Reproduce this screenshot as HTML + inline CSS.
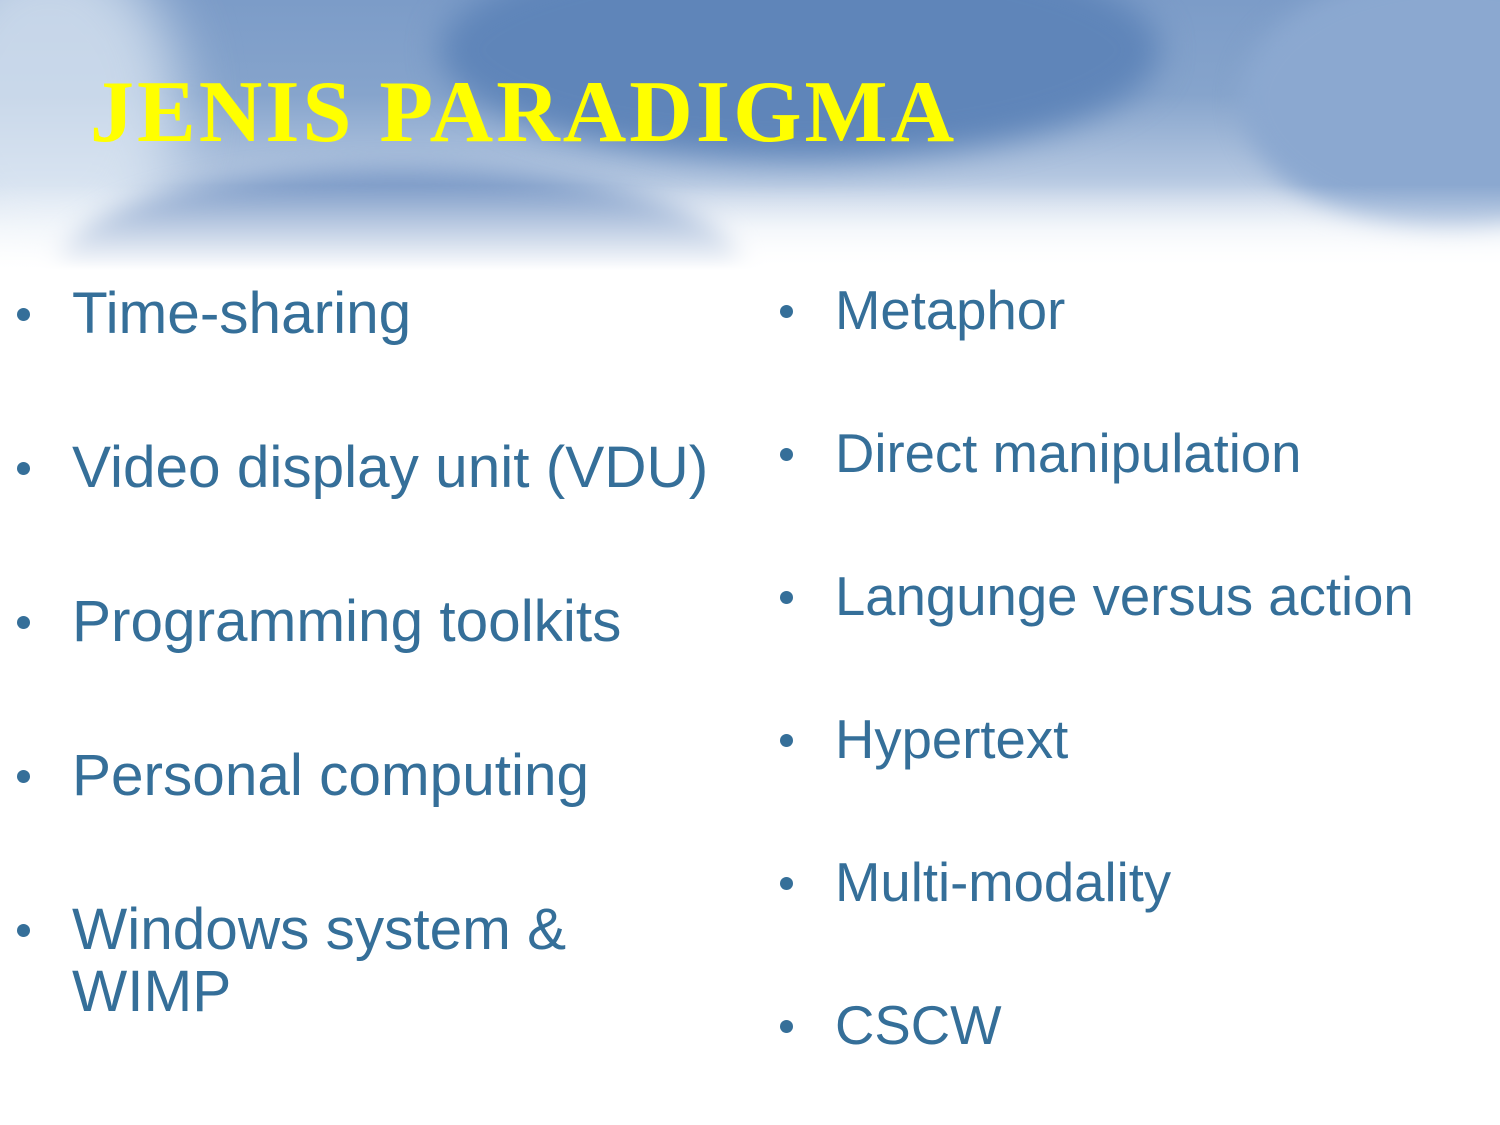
<!DOCTYPE html>
<html><head><meta charset="utf-8"><style>
html,body{margin:0;padding:0}
body{width:1500px;height:1125px;position:relative;overflow:hidden;background:#fff;font-family:"Liberation Sans",sans-serif}
.hdr{position:absolute;left:0;top:0;width:1500px;height:270px;overflow:hidden;
background:linear-gradient(180deg,#7c9cc8 0%,#86a4cc 35%,#b3c6e0 65%,#e8eef6 85%,#fff 100%)}
.b{position:absolute;border-radius:50%;filter:blur(8px)}
h1{position:absolute;left:90px;top:69px;margin:0;font-family:"Liberation Serif",serif;font-weight:bold;font-size:88px;color:#ffff00;letter-spacing:3px;line-height:1;white-space:nowrap}
.it{position:absolute;color:#356f99;font-size:58.5px;line-height:62px;white-space:nowrap}
.r{font-size:54.5px}
.it:before{content:"";position:absolute;left:-55px;top:25px;width:13px;height:13px;border-radius:50%;background:#356f99}
</style></head><body>
<div class="hdr">
<div class="b" style="left:-80px;top:-60px;width:260px;height:330px;background:rgba(230,238,247,.7);filter:blur(30px)"></div>
<div class="b" style="left:440px;top:-60px;width:720px;height:220px;background:#5f85b9;filter:blur(16px)"></div>
<div class="b" style="left:60px;top:168px;width:680px;height:200px;background:#7e9cc8;filter:blur(12px)"></div>
<div class="b" style="left:1240px;top:-30px;width:420px;height:260px;background:#8ba8d0;filter:blur(12px)"></div>
<div style="position:absolute;left:0;top:185px;width:1500px;height:85px;background:linear-gradient(180deg,rgba(255,255,255,0),#fff)"></div>
</div>
<h1>JENIS PARADIGMA</h1>
<div class="it" style="left:72px;top:283px">Time-sharing</div>
<div class="it" style="left:72px;top:437px">Video display unit (VDU)</div>
<div class="it" style="left:72px;top:591px">Programming toolkits</div>
<div class="it" style="left:72px;top:745px">Personal computing</div>
<div class="it" style="left:72px;top:899px">Windows system &amp;<br>WIMP</div>
<div class="it r" style="left:835px;top:280px">Metaphor</div>
<div class="it r" style="left:835px;top:423px">Direct manipulation</div>
<div class="it r" style="left:835px;top:566px">Langunge versus action</div>
<div class="it r" style="left:835px;top:709px">Hypertext</div>
<div class="it r" style="left:835px;top:852px">Multi-modality</div>
<div class="it r" style="left:835px;top:995px">CSCW</div>
</body></html>
